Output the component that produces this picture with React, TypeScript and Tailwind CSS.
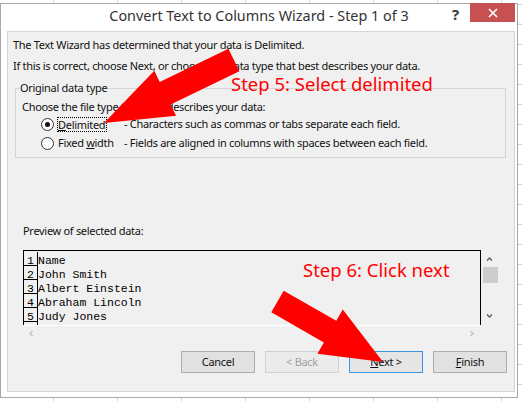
type Pt = [number, number];

// block arrow polygon from tail (middle of back edge) to tip
function arrowPoints(tail: Pt, tip: Pt, shaft: number, head: number, headLen: number) {
  const dx = tail[0] - tip[0];
  const dy = tail[1] - tip[1];
  const len = Math.hypot(dx, dy);
  const d = [dx / len, dy / len];
  const n = [-d[1], d[0]];
  const base = [tip[0] + d[0] * headLen, tip[1] + d[1] * headLen];
  const p = (o: number[], k: number) => [o[0] + n[0] * k, o[1] + n[1] * k];
  const pts = [p(tail, shaft), p(base, shaft), p(base, head), tip, p(base, -head), p(base, -shaft), p(tail, -shaft)];
  return pts.map((q) => q.map((v) => v.toFixed(1)).join(",")).join(" ");
}

const arrow1 = arrowPoints([233.9, 60], [104, 123], 12.5, 25, 68);
const arrow2 = arrowPoints([277.5, 301.5], [383, 362], 12.5, 25.5, 61);

const previewRows = ["Name", "John Smith", "Albert Einstein", "Abraham Lincoln", "Judy Jones"];

function Radio({ checked }: { checked?: boolean }) {
  return (
    <span className="w-[13px] h-[13px] rounded-full border border-[#333] bg-white flex items-center justify-center shrink-0">
      {checked && <span className="w-[5px] h-[5px] rounded-full bg-[#111]" />}
    </span>
  );
}

function Chevron({ dir, color }: { dir: "up" | "down" | "left" | "right"; color: string }) {
  const d = {
    up: "M1 4.5L3.5 2L6 4.5",
    down: "M1 1.5L3.5 4L6 1.5",
    left: "M4.5 1L2 3.5L4.5 6",
    right: "M1.5 1L4 3.5L1.5 6",
  }[dir];
  return (
    <svg width="7" height="7" viewBox="0 0 7 7" className="block">
      <path d={d} fill="none" stroke={color} strokeWidth="1.5" />
    </svg>
  );
}

function Button({ children, variant }: { children: React.ReactNode; variant?: "default" | "disabled" }) {
  const cls =
    variant === "default"
      ? "border-[#3c96e6] bg-[#e5e5e5] text-[#111]"
      : variant === "disabled"
        ? "border-[#d0d0d0] bg-[#ebebeb] text-[#a2a2a2]"
        : "border-[#adadad] bg-[#e1e1e1] text-[#111]";
  return (
    <div className={`w-[74px] h-[22px] border flex items-center justify-center ${cls}`}>{children}</div>
  );
}

export default function App() {
  return (
    <div className="relative w-[522px] h-[401px] overflow-hidden bg-white font-['Noto_Sans',sans-serif]">
      {/* excel sheet behind the dialog */}
      <div className="absolute inset-0 flex">
        <div className="w-[54px] h-full border-r border-[#d4d4d4] shrink-0" />
        {Array.from({ length: 8 }).map((_, i) => (
          <div key={i} className="w-[64px] h-full border-r border-[#d4d4d4] shrink-0" />
        ))}
      </div>
      <div className="absolute inset-0 flex flex-col">
        <div className="h-[5px] border-b border-[#d4d4d4] shrink-0" />
        {Array.from({ length: 20 }).map((_, i) => (
          <div key={i} className="h-[20px] border-b border-[#d4d4d4] shrink-0" />
        ))}
      </div>

      {/* dialog window */}
      <div className="absolute left-0 top-[3px] w-[518px] h-[395px] border border-[#a8a8a8] bg-white flex flex-col">
        <div className="relative h-[27px] shrink-0">
          <div className="pt-[2px] text-center text-[14.4px] leading-[20px] text-[#333]">
            Convert Text to Columns Wizard - Step 1 of 3
          </div>
          <div className="absolute left-[451px] top-[1px] text-[15px] font-bold leading-[18px] text-[#3a3a3a]">?</div>
          <div className="absolute right-[2px] top-[-1px] w-[45px] h-[19px] bg-[#c75050] flex items-center justify-center">
            <svg width="10" height="10" viewBox="0 0 10 10">
              <path d="M1 1L9 9M9 1L1 9" stroke="white" strokeWidth="1.7" />
            </svg>
          </div>
        </div>

        <div className="ml-[6px] mr-[2px] h-[361px] border border-[#d5d5d5] bg-[#f0f0f0] text-[11px] tracking-[-0.3px] leading-[16px] text-[#111] px-[5px] pt-[5px]">
          <p>The Text Wizard has determined that your data is Delimited.</p>
          <p className="mt-[5px]">
            If this is correct, choose Next, or choose the data type that best describes your data.
          </p>

          <fieldset className="mt-[6px] ml-[2px] w-[491px] border border-[#d5d5d5] px-[6px] pb-[6px]">
            <legend className="-ml-[3px] px-[1px]">Original data type</legend>
            <p className="mt-[3px]">Choose the file type that best describes your data:</p>
            <div className="mt-[1px] h-[16px] flex items-center">
              <div className="w-[83px] ml-[19px] flex items-center gap-[3px]">
                <Radio checked />
                <span className="border border-dotted border-black leading-[13px] pr-[1px]">
                  <span className="underline">D</span>elimited
                </span>
              </div>
              <span>- Characters such as commas or tabs separate each field.</span>
            </div>
            <div className="mt-[3px] h-[16px] flex items-center">
              <div className="w-[83px] ml-[19px] flex items-center gap-[4px]">
                <Radio />
                <span>
                  Fixed <span className="underline">w</span>idth
                </span>
              </div>
              <span>- Fields are aligned in columns with spaces between each field.</span>
            </div>
          </fieldset>

          <p className="mt-[65px] ml-[10px]">Preview of selected data:</p>

          <div className="mt-[11px] ml-[10px] w-[475px] flex">
            <div className="w-[458px] flex flex-col">
              <div className="h-[75px] border-t border-l border-r border-black flex pt-[1px] font-['Liberation_Mono',monospace] text-[11.5px] tracking-normal leading-[14px] text-black">
                <div className="w-[14px] h-full border-r border-black flex flex-col">
                  {previewRows.map((_, i) => (
                    <div key={i} className="h-[14px] leading-[17px] border-b border-black text-center shrink-0">
                      {i + 1}
                    </div>
                  ))}
                </div>
                <div className="flex flex-col">
                  {previewRows.map((r) => (
                    <div key={r} className="h-[14px] leading-[17px] whitespace-pre shrink-0">
                      {r}
                    </div>
                  ))}
                </div>
              </div>
              <div className="h-[15px] border-t border-white flex items-center justify-between px-[5px]">
                <Chevron dir="left" color="#c4c4c4" />
                <Chevron dir="right" color="#c4c4c4" />
              </div>
            </div>
            <div className="w-[17px] h-[75px] flex flex-col items-center pt-[6px] pb-[5px]">
              <Chevron dir="up" color="#606060" />
              <div className="mt-[4px] ml-[1px] w-[15px] h-[16px] bg-[#cdcdcd]" />
              <div className="flex-1" />
              <Chevron dir="down" color="#606060" />
            </div>
          </div>

          <div className="mt-[11px] mr-[2px] flex justify-end gap-[10px]">
            <Button>Cancel</Button>
            <Button variant="disabled">&lt; Back</Button>
            <Button variant="default">
              <span>
                <span className="underline">N</span>ext &gt;
              </span>
            </Button>
            <Button>
              <span>
                <span className="underline">F</span>inish
              </span>
            </Button>
          </div>
        </div>
      </div>

      {/* red annotations */}
      <svg className="absolute inset-0" width="522" height="401" viewBox="0 0 522 401">
        <polygon points={arrow1} fill="#ff0000" />
        <polygon points={arrow2} fill="#ff0000" />
      </svg>
      <div className="absolute left-[231px] top-[72px] text-[18.5px] leading-[24px] text-[#ff0000] whitespace-nowrap">
        Step 5: Select delimited
      </div>
      <div className="absolute left-[303px] top-[258px] text-[18.5px] leading-[24px] text-[#ff0000] whitespace-nowrap">
        Step 6: Click next
      </div>
    </div>
  );
}
